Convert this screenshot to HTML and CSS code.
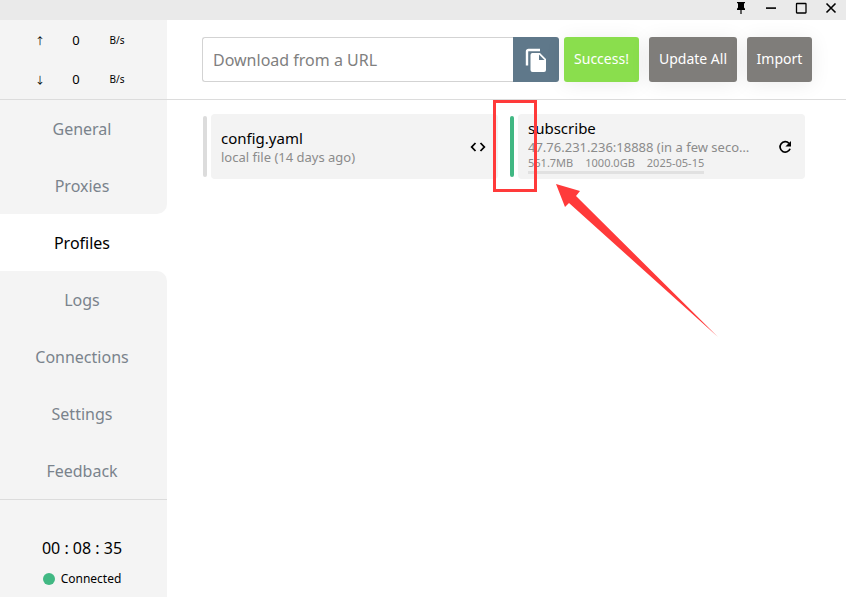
FILE: index.html
```html
<!DOCTYPE html>
<html lang="en">
<head>
    <meta charset="UTF-8" />
    <meta name="viewport" content="width=device-width, initial-scale=1.0"/>
    <title>Profiles</title>
    <link rel="stylesheet" href="styles.css">
</head>
<body>

<div class="titlebar">
    <button class="window-btn" aria-label="Pin">
        <svg width="14" height="14" viewBox="0 0 14 14"><path d="M3 1h8v1.3H10v4.2l1 1.2v1.3H7.6V13H6.4V9H3V7.700l1-1.200V2.300H3z"/></svg>
    </button>
    <button class="window-btn" aria-label="Minimize">
        <svg width="14" height="14" viewBox="0 0 14 14"><path d="M2 6.300h10v1.600H2z"/></svg>
    </button>
    <button class="window-btn" aria-label="Maximize">
        <svg width="14" height="14" viewBox="0 0 14 14"><rect x="2.500" y="2.500" width="9.500" height="9.500" rx="0.500" fill="none" stroke="#000" stroke-width="1.300"/></svg>
    </button>
    <button class="window-btn" aria-label="Close">
        <svg width="14" height="14" viewBox="0 0 14 14"><path d="M2.500 2.500l9 9M11.500 2.500l-9 9" fill="none" stroke="#000" stroke-width="1.600"/></svg>
    </button>
</div>

<div class="app">
    <aside class="sidebar">
        <div class="traffic">
            <div class="traffic-row"><span class="traffic-arrow">↑</span><span class="traffic-value">0</span><span>B/s</span></div>
            <div class="traffic-row"><span class="traffic-arrow">↓</span><span class="traffic-value">0</span><span>B/s</span></div>
        </div>

        <nav class="menu">
            <a href="#general" class="menu-item">General</a>
            <a href="#proxies" class="menu-item before-active">Proxies</a>
            <a href="#profiles" class="menu-item active">Profiles</a>
            <a href="#logs" class="menu-item after-active">Logs</a>
            <a href="#connections" class="menu-item">Connections</a>
            <a href="#settings" class="menu-item">Settings</a>
            <a href="#feedback" class="menu-item">Feedback</a>
        </nav>

        <div class="status">
            <div class="uptime">00 : 08 : 35</div>
            <div class="connection"><span class="dot"></span>Connected</div>
        </div>
    </aside>

    <main class="content">
        <div class="toolbar">
            <input class="url-input" type="text" placeholder="Download from a URL" aria-label="Download from a URL">
            <button class="paste-btn" aria-label="Paste">
                <svg width="24" height="26" viewBox="0 0 24 26">
                    <path d="M16 3H4.500A1.500 1.500 0 0 0 3 4.500V18.500" fill="none" stroke="#fff" stroke-width="2.400"/>
                    <path d="M8 6h8l6 6v11a2 2 0 0 1-2 2H8.500a2 2 0 0 1-2-2V8a2 2 0 0 1 1.500-2z" fill="#fff"/>
                    <path d="M15 7.500v5.500h5.500z" fill="#5f788a"/>
                </svg>
            </button>
            <button class="btn btn-success">Success!</button>
            <button class="btn">Update All</button>
            <button class="btn">Import</button>
        </div>

        <div class="profiles">
            <div class="profile">
                <div class="profile-mark"></div>
                <div class="profile-card">
                    <div class="profile-info">
                        <div class="profile-name">config.yaml</div>
                        <div class="profile-source">local file (14 days ago)</div>
                    </div>
                    <button class="icon-btn" aria-label="Edit">
                        <svg width="16" height="16" viewBox="0 0 16 16"><path d="M5.500 4L1.700 8l3.800 4M10.500 4l3.800 4-3.800 4" fill="none" stroke="#000" stroke-width="1.800"/></svg>
                    </button>
                </div>
            </div>

            <div class="profile selected">
                <div class="profile-mark"></div>
                <div class="profile-card">
                    <div class="profile-info">
                        <div class="profile-name">subscribe</div>
                        <div class="profile-source">47.76.231.236:18888 (in a few seconds)</div>
                        <div class="profile-usage">
                            <span>561.7MB</span><span>1000.0GB</span><span>2025-05-15</span>
                        </div>
                    </div>
                    <button class="icon-btn" aria-label="Refresh">
                        <svg width="16" height="16" viewBox="0 0 16 16"><path d="M12 4.300A5.200 5.200 0 1 0 13.100 9.800" fill="none" stroke="#000" stroke-width="1.700"/><path d="M14 2V7.600H8.400z"/></svg>
                    </button>
                </div>
                <div class="highlight"></div>
                <svg class="pointer" width="163" height="154" viewBox="0 0 163 154"><path d="M0 0l24 7-4 5 142 141L13 19l-4 4z" fill="#ff3a3a"/></svg>
            </div>
        </div>
    </main>
</div>

</body>
</html>
```
FILE: styles.css
```css
* {
    box-sizing: border-box;
}

body {
    margin: 0;
    min-height: 100vh;
    display: flex;
    flex-direction: column;
    font-family: "Noto Sans", "Open Sans", sans-serif;
    color: #000;
    background: #fff;
}

button {
    border: none;
    padding: 0;
    font-family: inherit;
    cursor: pointer;
}

svg {
    display: block;
}

.titlebar {
    display: flex;
    justify-content: flex-end;
    height: 20px;
    background: #eaeaea;
}

.window-btn {
    width: 30px;
    padding: 1px 8px 5px;
    background: none;
}

.app {
    flex: 1;
    display: flex;
}

.sidebar {
    width: 167px;
    flex-shrink: 0;
    display: flex;
    flex-direction: column;
}

.traffic {
    height: 80px;
    padding-top: 1px;
    background: #f4f4f4;
    border-bottom: 1px solid #dcdcdc;
}

.traffic-row {
    display: grid;
    grid-template-columns: 32px 40px 42px;
    height: 39px;
    padding-left: 24px;
    line-height: 39px;
    font-size: 10px;
    text-align: center;
}

.traffic-arrow {
    font-family: "Noto Sans CJK SC", sans-serif;
}

.traffic-value {
    font-size: 13px;
}

.menu-item {
    display: block;
    height: 57px;
    padding-right: 3px;
    line-height: 58px;
    font-size: 16px;
    text-align: center;
    text-decoration: none;
    color: #7a838c;
    background: #f4f4f4;
}

.menu-item.active {
    color: #000;
    background: #fff;
}

.before-active {
    border-bottom-right-radius: 10px;
}

.after-active {
    border-top-right-radius: 10px;
}

.status {
    flex: 1;
    padding: 36px 3px 0 0;
    text-align: center;
    background: #f4f4f4;
    border-top: 1px solid #dcdcdc;
}

.uptime {
    font-size: 16px;
    line-height: 24px;
}

.connection {
    display: flex;
    align-items: center;
    justify-content: center;
    gap: 6px;
    margin-top: 8px;
    font-size: 12px;
    line-height: 22px;
}

.dot {
    width: 12px;
    height: 12px;
    border-radius: 50%;
    background: #41b883;
}

.content {
    flex: 1;
    min-width: 0;
}

.toolbar {
    display: flex;
    height: 80px;
    padding: 17px 34px 17px 35px;
    border-bottom: 1px solid #dcdcdc;
}

.url-input {
    flex: 1;
    min-width: 0;
    padding: 0 10px;
    border: 1px solid #d3d3d3;
    border-right: none;
    border-radius: 3px 0 0 3px;
    font-family: inherit;
    font-size: 16px;
}

.url-input::placeholder {
    color: #808080;
}

.paste-btn {
    width: 46px;
    margin-right: 5px;
    padding: 0 11px;
    border-radius: 0 3px 3px 0;
    background: #5f788a;
}

.btn {
    width: 88px;
    padding-bottom: 2px;
    border-radius: 3px;
    font-size: 14px;
    color: #fff;
    background: #7f7d7a;
    box-shadow: 0 2px 20px rgba(0, 0, 0, 0.08);
}

.btn + .btn {
    margin-left: 10px;
}

.btn-success {
    width: 75px;
    background: #8ade4d;
}

.btn:last-child {
    width: 65px;
}

.profiles {
    display: grid;
    grid-template-columns: 1fr 1fr;
    gap: 12px;
    padding: 14px 41px 0 36px;
}

.profile {
    position: relative;
    display: flex;
    gap: 4px;
    height: 65px;
    min-width: 0;
}

.profile-mark {
    width: 4px;
    margin: 2px 0;
    border-radius: 2px;
    background: #dcdcdc;
}

.selected .profile-mark {
    background: #41b883;
}

.profile-card {
    flex: 1;
    min-width: 0;
    display: flex;
    align-items: center;
    justify-content: space-between;
    padding: 0 12px 0 10px;
    border-radius: 4px;
    background: #f3f3f3;
}

.profile-info {
    width: 228px;
    min-width: 0;
}

.profile-name {
    font-size: 15px;
    line-height: 20px;
}

.profile-source {
    overflow: hidden;
    white-space: nowrap;
    text-overflow: ellipsis;
    font-size: 13px;
    line-height: 18px;
    color: #8b8b8b;
}

.profile-usage {
    display: flex;
    gap: 12px;
    width: max-content;
    margin-bottom: 2px;
    padding-bottom: 1px;
    border-bottom: 3px solid #e1e1e1;
    font-size: 11px;
    line-height: 14px;
    color: #8b8b8b;
}

.icon-btn {
    background: none;
}

/* call-out over the selected profile */
.highlight {
    position: absolute;
    top: -14px;
    left: -17px;
    width: 44px;
    height: 92px;
    border: 3px solid #ff3a3a;
}

.pointer {
    position: absolute;
    top: 70px;
    left: 46px;
}
```
